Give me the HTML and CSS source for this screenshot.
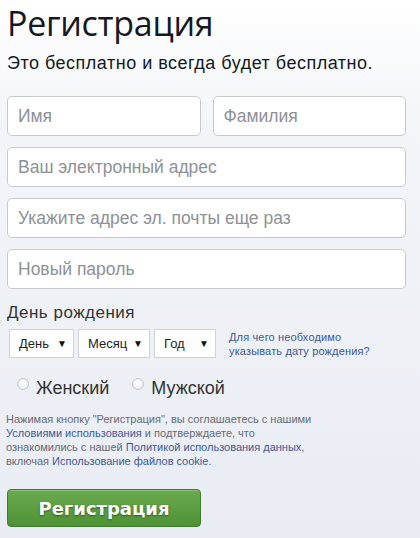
FILE: index.html
```html
<!DOCTYPE html>
<html lang="ru">
<head>
<meta charset="utf-8">
<link rel="stylesheet" href="styles.css">
</head>
<body>
<div class="page">
  <h1 class="title">Регистрация</h1>
  <p class="subtitle">Это бесплатно и всегда будет бесплатно.</p>
  <div class="row">
    <div class="field half">Имя</div>
    <div class="field half">Фамилия</div>
  </div>
  <div class="field">Ваш электронный адрес</div>
  <div class="field">Укажите адрес эл. почты еще раз</div>
  <div class="field">Новый пароль</div>
  <div class="label">День рождения</div>
  <div class="birth">
    <div class="select s-day"><span>День</span><span class="arrow">▼</span></div>
    <div class="select s-month"><span>Месяц</span><span class="arrow">▼</span></div>
    <div class="select s-year"><span>Год</span><span class="arrow">▼</span></div>
    <a class="why">Для чего необходимо<br>указывать дату рождения?</a>
  </div>
  <div class="gender">
    <span class="radio"></span><span class="rlabel">Женский</span>
    <span class="radio r2"></span><span class="rlabel">Мужской</span>
  </div>
  <p class="terms">Нажимая кнопку "Регистрация", вы соглашаетесь с нашими<br><a>Условиями использования</a> и подтверждаете, что<br>ознакомились с нашей <a>Политикой использования данных</a>,<br>включая <a>Использование файлов cookie</a>.</p>
  <div class="btn">Регистрация</div>
</div>
</body>
</html>
```
FILE: styles.css
```css
html, body {
  margin: 0;
  padding: 0;
}
body {
  width: 420px;
  height: 538px;
  overflow: hidden;
  background: linear-gradient(#ffffff 0px, #f3f5f9 120px, #e9ecf3 538px);
  font-family: "Liberation Sans", Arial, sans-serif;
}
.page {
  padding: 0 14px 0 7px;
  display: flex;
  flex-direction: column;
}
.title {
  margin: 0;
  padding-top: 1px;
  font-family: "Open Sans", sans-serif;
  font-weight: 400;
  font-size: 34px;
  line-height: 44px;
  color: #141823;
  letter-spacing: -0.3px;
}
.subtitle {
  margin: 7px 0 0 0;
  font-size: 18px;
  line-height: 22px;
  color: #141823;
  letter-spacing: 0.5px;
}
.row {
  display: flex;
  gap: 12px;
  margin-top: 22px;
}
.field {
  box-sizing: border-box;
  height: 40px;
  border: 1px solid #c6c9d0;
  border-radius: 5px;
  background: #fff;
  padding: 0 10px;
  display: flex;
  align-items: center;
  font-size: 17.5px;
  color: #8e9196;
  margin-top: 11px;
}
.row .field {
  margin-top: 0;
}
.half {
  flex: 1;
}
.label {
  margin-top: 13px;
  font-size: 17px;
  line-height: 22px;
  color: #333;
  letter-spacing: 0.5px;
}
.birth {
  display: flex;
  align-items: center;
  margin-top: 5px;
  padding-left: 2px;
  gap: 4px;
}
.select {
  box-sizing: border-box;
  height: 29px;
  background: #fff;
  border: 1px solid #cfd2d8;
  display: flex;
  align-items: center;
  justify-content: space-between;
  padding: 0 6px 0 9px;
  font-size: 13px;
  color: #1d1d1d;
}
.arrow {
  font-size: 10px;
  color: #111;
}
.s-day { width: 65px; }
.s-month { width: 72px; padding-left: 9px; }
.s-year { width: 62px; }
.why {
  margin-left: 9px;
  font-size: 11px;
  line-height: 14px;
  color: #3b5998;
  letter-spacing: 0.15px;
}
.gender {
  display: flex;
  align-items: center;
  margin-top: 19px;
  padding-left: 10px;
  height: 22px;
}
.radio {
  width: 10px;
  height: 10px;
  border-radius: 50%;
  border: 1px solid #c4c7cc;
  background: radial-gradient(circle at 50% 40%, #ffffff 0%, #e4e6ea 100%);
  align-self: flex-start;
  margin-top: 1px;
}
.rlabel {
  font-size: 18px;
  color: #333;
  margin-left: 7px;
}
.r2 {
  margin-left: 23px;
}
.terms {
  margin: 13px 0 0 -1px;
  font-size: 11px;
  line-height: 14px;
  color: #666a73;
}
.terms a {
  color: #3b5998;
}
.btn {
  box-sizing: border-box;
  width: 194px;
  height: 38px;
  margin-top: 21px;
  border: 1px solid #3e7c2a;
  border-radius: 4px;
  background: linear-gradient(#6aaa4f, #4f9235);
  display: flex;
  align-items: center;
  justify-content: center;
  font-family: "DejaVu Sans", Verdana, sans-serif;
  font-weight: bold;
  font-size: 18px;
  color: #fff;
  text-shadow: 0 1px 2px rgba(30, 60, 20, 0.7);
  box-shadow: inset 0 1px 0 rgba(255,255,255,0.25);
}
```
